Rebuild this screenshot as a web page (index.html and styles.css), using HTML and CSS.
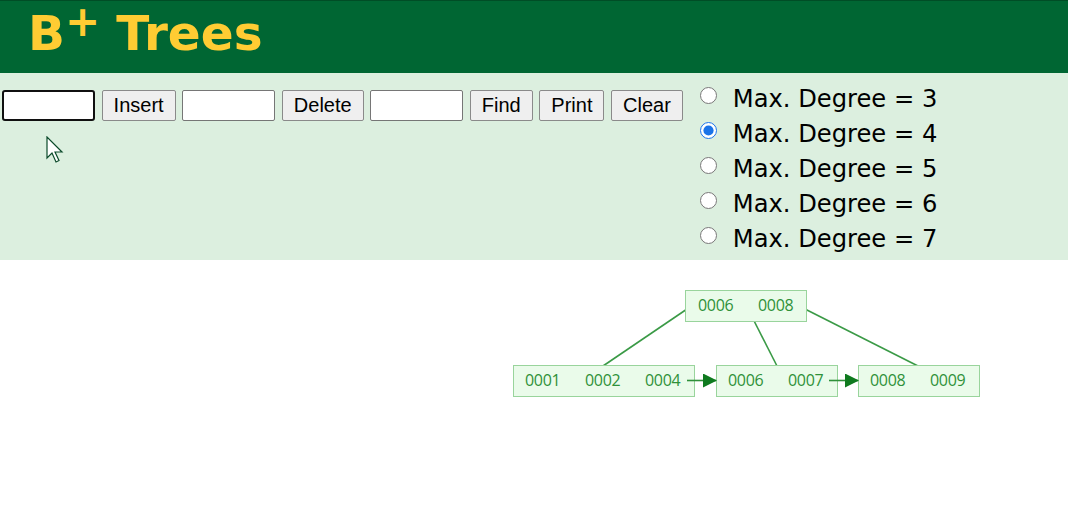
FILE: index.html
```html
<!DOCTYPE html>
<html>
<head>
<meta charset="utf-8">
<title>B+ Trees</title>
<link rel="stylesheet" href="styles.css">
</head>
<body>
<header class="header">
  <h1 class="title">B<sup class="plus">+</sup>Trees</h1>
</header>
<section class="panel">
  <div class="controls">
    <input class="field field-focus" type="text">
    <button class="btn">Insert</button>
    <input class="field" type="text">
    <button class="btn">Delete</button>
    <input class="field" type="text">
    <button class="btn">Find</button>
    <button class="btn">Print</button>
    <button class="btn">Clear</button>
  </div>
  <div class="degrees">
    <label class="deg"><input class="radio" type="radio" name="d"><span>Max. Degree = 3</span></label>
    <label class="deg"><input class="radio" type="radio" name="d" checked><span>Max. Degree = 4</span></label>
    <label class="deg"><input class="radio" type="radio" name="d"><span>Max. Degree = 5</span></label>
    <label class="deg"><input class="radio" type="radio" name="d"><span>Max. Degree = 6</span></label>
    <label class="deg"><input class="radio" type="radio" name="d"><span>Max. Degree = 7</span></label>
  </div>
  <svg class="cursor" width="20" height="28" viewBox="0 0 20 28">
    <path d="M1 1 L1 22 L6 17 L10 26 L13 24.5 L9 16 L16 16 Z" fill="#ffffff" stroke="#0b4a2a" stroke-width="1.2" stroke-linejoin="miter"/>
  </svg>
</section>
<section class="canvas">
  <svg class="tree" width="1068" height="249" viewBox="0 260 1068 249">
    <defs>
      <marker id="ah" markerWidth="14" markerHeight="14" refX="13" refY="7" orient="auto" markerUnits="userSpaceOnUse">
        <path d="M0 0 L14 7 L0 14 Z" fill="#0f7a1f"/>
      </marker>
    </defs>
    <g class="links">
      <line x1="690" y1="307" x2="603" y2="366"/>
      <line x1="746" y1="305" x2="777" y2="366"/>
      <line x1="799" y1="306" x2="918" y2="366"/>
    </g>
    <g class="boxes">
      <rect x="685.5" y="290.5" width="121" height="31"/>
      <rect x="513.5" y="365.5" width="181" height="31"/>
      <rect x="716.5" y="365.5" width="121" height="31"/>
      <rect x="858.5" y="365.5" width="121" height="31"/>
    </g>
    <g class="arrows">
      <line x1="687" y1="380.5" x2="716" y2="380.5" marker-end="url(#ah)"/>
      <line x1="829" y1="380.5" x2="858" y2="380.5" marker-end="url(#ah)"/>
    </g>
    <g class="keys">
      <text x="698" y="311">0006</text>
      <text x="758" y="311">0008</text>
      <text x="525" y="386">0001</text>
      <text x="585" y="386">0002</text>
      <text x="645" y="386">0004</text>
      <text x="728" y="386">0006</text>
      <text x="788" y="386">0007</text>
      <text x="870" y="386">0008</text>
      <text x="930" y="386">0009</text>
    </g>
  </svg>
</section>
</body>
</html>
```
FILE: styles.css
```css
html, body {
  margin: 0;
  padding: 0;
  background: #ffffff;
}
body {
  width: 1068px;
  height: 509px;
  overflow: hidden;
  font-family: "Liberation Sans", Arial, sans-serif;
}
.header {
  background: #006633;
  border-top: 1px solid #004d26;
  height: 72px;
  box-sizing: content-box;
  display: flex;
  align-items: center;
}
.title {
  margin: 0 0 0 28px;
  font-family: "DejaVu Sans", Verdana, sans-serif;
  font-weight: bold;
  font-size: 48.5px;
  line-height: 64px;
  color: #ffcc33;
  position: relative;
  top: -4px;
}
.plus {
  font-size: 42px;
  font-weight: bold;
  line-height: 42px;
  vertical-align: 14px;
  margin-left: 0;
  margin-right: 16px;
}
.panel {
  background: #dcefdf;
  height: 187px;
  display: flex;
  align-items: flex-start;
  position: relative;
}
.controls {
  display: flex;
  gap: 6.6px;
  padding: 17px 0 0 2px;
}
.field {
  width: 93px;
  height: 31px;
  box-sizing: border-box;
  border: 1px solid #767676;
  border-radius: 2px;
  background: #ffffff;
  margin: 0;
  padding: 0 4px;
  font: 20px "Liberation Sans", Arial, sans-serif;
}
.field-focus {
  border: 2px solid #101010;
  border-radius: 3px;
}
.btn {
  height: 31px;
  box-sizing: border-box;
  border: 1px solid #8a8a8a;
  border-radius: 2px;
  background: #efefef;
  color: #000;
  margin: 0;
  padding: 0 11px;
  font: 20px "Liberation Sans", Arial, sans-serif;
}
.degrees {
  display: flex;
  flex-direction: column;
  margin-left: 17px;
  padding-top: 9px;
}
.deg {
  display: flex;
  align-items: center;
  height: 35px;
  font-family: "DejaVu Sans", Verdana, sans-serif;
  font-size: 24.2px;
  color: #000;
}
.radio {
  width: 17px;
  height: 17px;
  margin: 0 16px 0 0;
  accent-color: #1a73e8;
  position: relative;
  top: -4px;
}
.deg span {
  position: relative;
  top: -1px;
}
.cursor {
  position: absolute;
  left: 46px;
  top: 63px;
}
.canvas {
  height: 249px;
}
.tree {
  display: block;
}
.links line {
  stroke: #3a9a46;
  stroke-width: 1.6;
}
.boxes rect {
  fill: #eafbea;
  stroke: #99d49c;
  stroke-width: 1;
}
.arrows line {
  stroke: #2f8f3a;
  stroke-width: 1.6;
}
.keys text {
  font-family: "Open Sans", sans-serif;
  font-size: 16px;
  letter-spacing: -0.3px;
  fill: #2f9139;
}
```
